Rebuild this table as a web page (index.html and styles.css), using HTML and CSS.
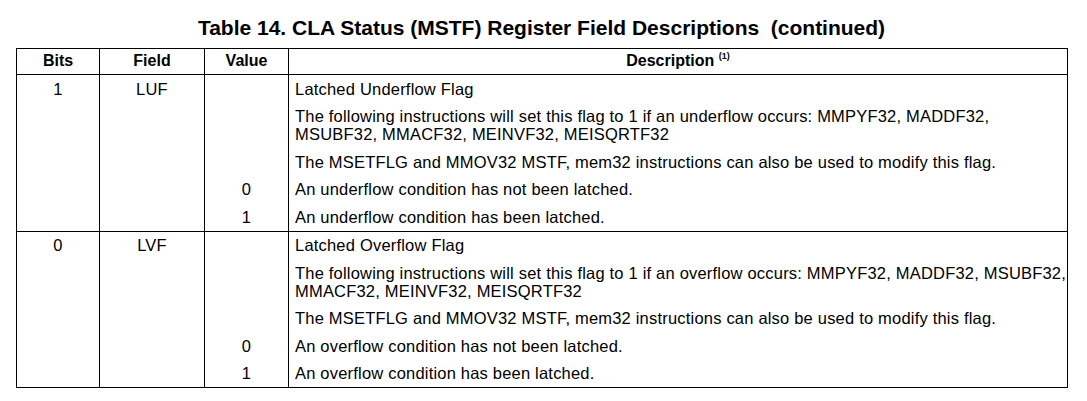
FILE: index.html
```html
<!DOCTYPE html>
<html>
<head>
<meta charset="utf-8">
<link rel="stylesheet" href="styles.css">
</head>
<body>
<div class="page">
  <h1 class="title">Table 14. CLA Status (MSTF) Register Field Descriptions&nbsp; (continued)</h1>
  <table class="reg">
    <colgroup>
      <col class="w-bits"><col class="w-field"><col class="w-value"><col class="w-desc">
    </colgroup>
    <thead>
      <tr><th>Bits</th><th>Field</th><th>Value</th><th>Description <sup>(1)</sup></th></tr>
    </thead>
    <tbody class="grp">
      <tr><td rowspan="5" class="c">1</td><td rowspan="5" class="c">LUF</td><td class="c"></td><td>Latched Underflow Flag</td></tr>
      <tr><td class="c"></td><td>The following instructions will set this flag to 1 if an underflow occurs: MMPYF32, MADDF32,<br>MSUBF32, MMACF32, MEINVF32, MEISQRTF32</td></tr>
      <tr><td class="c"></td><td>The MSETFLG and MMOV32 MSTF, mem32 instructions can also be used to modify this flag.</td></tr>
      <tr><td class="c">0</td><td>An underflow condition has not been latched.</td></tr>
      <tr><td class="c">1</td><td>An underflow condition has been latched.</td></tr>
    </tbody>
    <tbody class="grp">
      <tr><td rowspan="5" class="c">0</td><td rowspan="5" class="c">LVF</td><td class="c"></td><td>Latched Overflow Flag</td></tr>
      <tr><td class="c"></td><td>The following instructions will set this flag to 1 if an overflow occurs: MMPYF32, MADDF32, MSUBF32,<br>MMACF32, MEINVF32, MEISQRTF32</td></tr>
      <tr><td class="c"></td><td>The MSETFLG and MMOV32 MSTF, mem32 instructions can also be used to modify this flag.</td></tr>
      <tr><td class="c">0</td><td>An overflow condition has not been latched.</td></tr>
      <tr><td class="c">1</td><td>An overflow condition has been latched.</td></tr>
    </tbody>
  </table>
</div>
</body>
</html>
```
FILE: styles.css
```css
html, body {
  margin: 0;
  padding: 0;
  background: #fff;
  color: #000;
  font-family: "Liberation Sans", Arial, sans-serif;
}
.page {
  padding: 17px 0 0 16px;
  width: 1051px;
}
.title {
  margin: 0 0 9px 0;
  font-size: 21px;
  line-height: 22px;
  font-weight: bold;
  text-align: center;
  white-space: nowrap;
}
.reg {
  border-collapse: collapse;
  table-layout: fixed;
  width: 1051px;
  font-size: 16.5px;
  line-height: 18px;
  letter-spacing: 0.2px;
}
.w-bits { width: 83px; }
.w-field { width: 105px; }
.w-value { width: 84px; }
.w-desc { width: 779px; }
.reg th {
  border: 1px solid #000;
  font-weight: bold;
  font-size: 16px;
  letter-spacing: 0;
  text-align: center;
  padding: 3px 0 4px;
  height: 18px;
}
.reg th sup {
  font-size: 9px;
  vertical-align: 7px;
  line-height: 0;
}
.reg td {
  border-left: 1px solid #000;
  border-right: 1px solid #000;
  padding: 4.5px 6px 5px;
  vertical-align: top;
  white-space: nowrap;
}
.reg td.c {
  text-align: center;
  padding-left: 0;
  padding-right: 0;
}
.grp {
  border-top: 1px solid #000;
  border-bottom: 1px solid #000;
}
```
